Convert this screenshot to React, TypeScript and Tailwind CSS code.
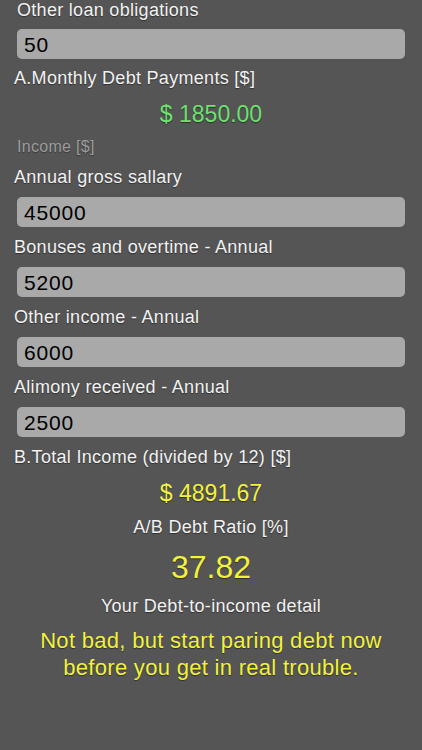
import React from "react";

const font = { fontFamily: '"Liberation Sans", Arial, sans-serif' };

function Label({ text, pl = "pl-[14px]", h = "h-10" }: { text: string; pl?: string; h?: string }) {
  return (
    <div className={`flex ${h} items-center ${pl}`}>
      <span className="text-[18px] leading-[20px] tracking-[0.3px] text-[#f2f2f2] [text-shadow:0_1px_1px_rgba(0,0,0,0.45)]">
        {text}
      </span>
    </div>
  );
}

function Field({ value }: { value: string }) {
  return (
    <div className="mx-[17px] flex h-[30px] items-center rounded-[5px] bg-[#a9a9a9] pl-[7px]">
      <span className="text-[21px] leading-none tracking-[0.8px] text-black">{value}</span>
    </div>
  );
}

export default function App() {
  return (
    <div style={font} className="flex h-[750px] w-full flex-col overflow-hidden bg-[#555555]">
      <div className="flex h-[29px] items-start pl-[17px]">
        <span className="text-[18px] leading-[20px] tracking-[0.3px] text-[#f2f2f2] [text-shadow:0_1px_1px_rgba(0,0,0,0.45)]">
          Other loan obligations
        </span>
      </div>
      <Field value="50" />
      <Label text="A.Monthly Debt Payments [$]" h="h-[38px]" />
      <div className="flex h-[34px] items-center justify-center">
        <span className="text-[23px] leading-none text-[#6ee26e] [text-shadow:0_1px_1px_rgba(0,0,0,0.45)]">
          $ 1850.00
        </span>
      </div>
      <div className="flex h-[26px] items-start pl-[17px] pt-[8px]">
        <span className="text-[16px] leading-[16px] tracking-[0.3px] text-[#9c9c9c] [text-shadow:0_1px_1px_rgba(0,0,0,0.35)]">
          Income [$]
        </span>
      </div>
      <Label text="Annual gross sallary" />
      <Field value="45000" />
      <Label text="Bonuses and overtime - Annual" />
      <Field value="5200" />
      <Label text="Other income - Annual" />
      <Field value="6000" />
      <Label text="Alimony received - Annual" />
      <Field value="2500" />
      <Label text="B.Total Income (divided by 12) [$]" h="h-[40px]" />
      <div className="flex h-[32px] items-center justify-center">
        <span className="text-[23px] leading-none text-[#f2f23c] [text-shadow:0_1px_1px_rgba(0,0,0,0.45)]">
          $ 4891.67
        </span>
      </div>
      <div className="flex h-[36px] items-center justify-center">
        <span className="text-[18px] leading-none tracking-[0.3px] text-[#f2f2f2] [text-shadow:0_1px_1px_rgba(0,0,0,0.45)]">
          A/B Debt Ratio [%]
        </span>
      </div>
      <div className="flex h-[44px] items-center justify-center">
        <span className="text-[32px] leading-none text-[#f2f23c] [text-shadow:0_1px_1px_rgba(0,0,0,0.45)]">
          37.82
        </span>
      </div>
      <div className="flex h-[34px] items-center justify-center">
        <span className="text-[18px] leading-none tracking-[0.3px] text-[#f2f2f2] [text-shadow:0_1px_1px_rgba(0,0,0,0.45)]">
          Your Debt-to-income detail
        </span>
      </div>
      <div className="pt-[4px] text-center text-[22px] leading-[27px] tracking-[0.3px] text-[#f2f23c] [text-shadow:0_1px_1px_rgba(0,0,0,0.45)]">
        Not bad, but start paring debt now
        <br />
        before you get in real trouble.
      </div>
    </div>
  );
}
